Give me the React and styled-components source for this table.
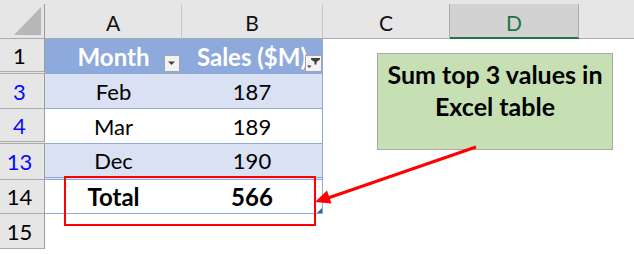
import React from 'react';
import styled, { createGlobalStyle } from 'styled-components';

const GlobalStyle = createGlobalStyle`
  html, body { margin: 0; padding: 0; background: #ffffff; }
  body { overflow: hidden; }
  *, *::before, *::after { box-sizing: border-box; }
`;

const COLS = '45px 137px 141px 127px 129px 1fr';
const FONT = `'Lato', 'Open Sans', sans-serif`;

const Sheet = styled.div`
  position: relative;
  width: 634px;
  height: 254px;
  overflow: hidden;
  font-family: ${FONT};
  background: #ffffff;
`;

const HeaderRow = styled.div`
  display: grid;
  grid-template-columns: ${COLS};
  height: 39px;
  padding-top: 4px;
  background: #e6e6e6;
`;

const Corner = styled.div`
  border-right: 1px solid #9c9c9c;
  border-bottom: 1px solid #ababab;
  display: flex;
`;

const ColHead = styled.div`
  display: flex;
  align-items: center;
  justify-content: center;
  padding-top: 3px;
  font-size: 21px;
  color: ${p => (p.$selected ? '#217346' : '#111111')};
  background: ${p => (p.$selected ? '#d2d2d2' : '#e6e6e6')};
  border-right: ${p => (p.$last ? 'none' : `1px solid ${p.$strong ? '#ababab' : '#c8c8c8'}`)};
  border-bottom: ${p => (p.$selected ? '2px solid #217346' : '1px solid #ababab')};
`;

const Row = styled.div`
  display: grid;
  grid-template-columns: ${COLS};
  height: ${p => p.$h}px;
`;

const RowHead = styled.div`
  display: flex;
  align-items: center;
  justify-content: center;
  padding-right: 5px;
  font-size: 22px;
  background: #e6e6e6;
  color: ${p => (p.$filtered ? '#0a0aff' : '#000000')};
  border-right: 1px solid #9c9c9c;
  border-bottom: ${p => (p.$double ? '3px double #ababab' : '1px solid #ababab')};
`;

const FILLS = {
  head: '#8ea9db',
  band: '#d9e1f2',
  plain: '#ffffff',
  total: '#ffffff',
  empty: '#ffffff',
};

const BOTTOMS = {
  head: 'none',
  band: '1px solid #8ea9db',
  plain: '1px solid #8ea9db',
  total: '1px solid #8ea9db',
  empty: 'none',
  last: '3px double #8ea9db',
};

const isBold = k => k === 'head' || k === 'total';

const Cell = styled.div`
  position: relative;
  display: flex;
  align-items: center;
  justify-content: center;
  white-space: nowrap;
  font-size: ${p => (isBold(p.$kind) ? 24 : 22)}px;
  background: ${p => FILLS[p.$kind]};
  color: ${p => (p.$kind === 'head' ? '#ffffff' : '#000000')};
  font-weight: ${p => (isBold(p.$kind) ? 700 : 400)};
  border-bottom: ${p => BOTTOMS[p.$lastBand ? 'last' : p.$kind]};
  border-right: ${p => (p.$edge ? '1px solid #8ea9db' : 'none')};
`;

const Blank = styled.div`
  background: #ffffff;
`;

const FilterBtn = styled.span`
  position: absolute;
  top: 16px;
  right: ${p => p.$right}px;
  width: ${p => p.$w}px;
  height: 17px;
  background: #f3f3f3;
  border: 1px solid #a6a6a6;
  display: block;
`;

const BtnIcon = styled.svg`
  display: block;
  width: 100%;
  height: 100%;
`;

const ResizeHandle = styled.svg`
  position: absolute;
  right: 0;
  bottom: 0;
  width: 5px;
  height: 5px;
`;

const Callout = styled.div`
  position: absolute;
  left: 377px;
  top: 53px;
  width: 236px;
  height: 97px;
  padding-top: 4px;
  background: #c6e0b4;
  border: 1px solid #a9a9a9;
  text-align: center;
  font-family: ${FONT};
  font-weight: 700;
  font-size: 25px;
  line-height: 32px;
  color: #000000;
  white-space: nowrap;
`;

const Overlay = styled.svg`
  position: absolute;
  left: 0;
  top: 0;
  width: 634px;
  height: 254px;
  pointer-events: none;
`;

const rows = [
  { n: '1', h: 35, double: true, a: 'Month', b: 'Sales ($M)', kind: 'head' },
  { n: '3', h: 35, filtered: true, a: 'Feb', b: '187', kind: 'band' },
  { n: '4', h: 35, filtered: true, double: true, a: 'Mar', b: '189', kind: 'plain' },
  { n: '13', h: 36, filtered: true, a: 'Dec', b: '190', kind: 'band', lastBand: true },
  { n: '14', h: 34, a: 'Total', b: '566', kind: 'total' },
  { n: '15', h: 35, kind: 'empty' },
];

function DropIcon() {
  return (
    <BtnIcon viewBox="0 0 14 15">
      <polygon points="3,5.5 10,5.5 6.5,9" fill="#404040" />
    </BtnIcon>
  );
}

function FilterIcon() {
  return (
    <BtnIcon viewBox="0 0 15 15">
      <polygon points="5,2 14,2 14,3.5 10.5,6 10.5,8.5 8.5,8.5 8.5,6 5,3.5" fill="#404040" />
      <polygon points="1,9.5 5.5,9.5 3.25,12" fill="#404040" />
    </BtnIcon>
  );
}

export default function App() {
  return (
    <>
      <GlobalStyle />
      <Sheet>
        <HeaderRow>
          <Corner>
            <svg width="44" height="34" viewBox="0 0 44 34">
              <polygon points="41,3 41,31 14,31" fill="#b7b7b7" />
            </svg>
          </Corner>
          <ColHead>A</ColHead>
          <ColHead>B</ColHead>
          <ColHead $strong>C</ColHead>
          <ColHead $selected $strong>D</ColHead>
          <ColHead $last />
        </HeaderRow>

        {rows.map(r => (
          <Row key={r.n} $h={r.h}>
            <RowHead $filtered={r.filtered} $double={r.double}>{r.n}</RowHead>
            <Cell $kind={r.kind} $lastBand={r.lastBand}>
              {r.a}
              {r.kind === 'head' && (
                <FilterBtn $right={2} $w={16}>
                  <DropIcon />
                </FilterBtn>
              )}
            </Cell>
            <Cell $kind={r.kind} $lastBand={r.lastBand} $edge={r.kind !== 'empty'}>
              {r.b}
              {r.kind === 'head' && (
                <FilterBtn $right={0} $w={17}>
                  <FilterIcon />
                </FilterBtn>
              )}
              {r.kind === 'total' && (
                <ResizeHandle viewBox="0 0 5 5">
                  <polygon points="5,0 5,5 0,5" fill="#3a5ba0" />
                </ResizeHandle>
              )}
            </Cell>
            <Blank />
            <Blank />
            <Blank />
          </Row>
        ))}

        <Callout>
          Sum top 3 values in
          <br />
          Excel table
        </Callout>

        <Overlay viewBox="0 0 634 254">
          <rect x="65" y="177" width="250" height="48" fill="none" stroke="#ff0000" strokeWidth="2" />
          <line x1="476" y1="147" x2="328" y2="198" stroke="#ff0000" strokeWidth="3" />
          <polygon points="315,202 331.5,203.5 327,190.5" fill="#ff0000" />
        </Overlay>
      </Sheet>
    </>
  );
}
